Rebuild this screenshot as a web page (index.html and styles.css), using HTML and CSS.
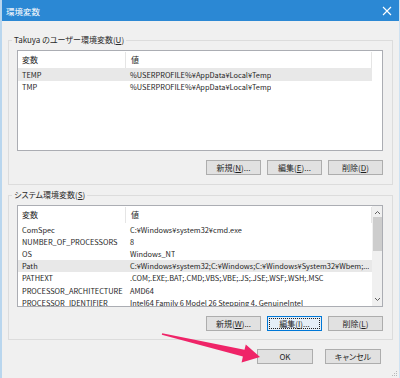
FILE: index.html
```html
<!DOCTYPE html>
<html lang="ja">
<head>
    <meta charset="UTF-8">
    <title>環境変数</title>
    <link rel="stylesheet" href="styles.css">
</head>
<body>
    <div class="window">
        <div class="titlebar">
            <span class="title">環境変数</span>
            <svg class="close" width="10" height="10" viewBox="0 0 10 10">
                <path d="M1 1 L9 9 M9 1 L1 9" stroke="#fff" stroke-width="1.1" fill="none"/>
            </svg>
        </div>

        <div class="body">
            <fieldset class="group">
                <legend>Takuya のユーザー環境変数(<u>U</u>)</legend>
                <div class="list list-user">
                    <div class="rows">
                        <div class="row head"><span class="name">変数</span><span class="value">値</span></div>
                        <div class="row selected"><span class="name">TEMP</span><span class="value">%USERPROFILE%¥AppData¥Local¥Temp</span></div>
                        <div class="row"><span class="name">TMP</span><span class="value">%USERPROFILE%¥AppData¥Local¥Temp</span></div>
                    </div>
                </div>
                <div class="buttons">
                    <button>新規(<u>N</u>)...</button>
                    <button>編集(<u>E</u>)...</button>
                    <button>削除(<u>D</u>)</button>
                </div>
            </fieldset>

            <fieldset class="group group-system">
                <legend>システム環境変数(<u>S</u>)</legend>
                <div class="list list-system">
                    <div class="rows">
                        <div class="row head"><span class="name">変数</span><span class="value">値</span></div>
                        <div class="row"><span class="name">ComSpec</span><span class="value">C:¥Windows¥system32¥cmd.exe</span></div>
                        <div class="row"><span class="name">NUMBER_OF_PROCESSORS</span><span class="value">8</span></div>
                        <div class="row"><span class="name">OS</span><span class="value">Windows_NT</span></div>
                        <div class="row selected"><span class="name">Path</span><span class="value">C:¥Windows¥system32;C:¥Windows;C:¥Windows¥System32¥Wbem;...</span></div>
                        <div class="row"><span class="name">PATHEXT</span><span class="value">.COM;.EXE;.BAT;.CMD;.VBS;.VBE;.JS;.JSE;.WSF;.WSH;.MSC</span></div>
                        <div class="row"><span class="name">PROCESSOR_ARCHITECTURE</span><span class="value">AMD64</span></div>
                        <div class="row"><span class="name">PROCESSOR_IDENTIFIER</span><span class="value">Intel64 Family 6 Model 26 Stepping 4, GenuineIntel</span></div>
                    </div>
                    <div class="scrollbar">
                        <svg class="arrow-up" width="7" height="5" viewBox="0 0 7 5"><path d="M1 4 L3.5 1.5 L6 4" stroke="#606060" stroke-width="1" fill="none"/></svg>
                        <div class="thumb"></div>
                        <svg class="arrow-down" width="7" height="5" viewBox="0 0 7 5"><path d="M1 1 L3.5 3.5 L6 1" stroke="#606060" stroke-width="1" fill="none"/></svg>
                    </div>
                </div>
                <div class="buttons">
                    <button>新規(<u>W</u>)...</button>
                    <button class="focused"><span class="focus-ring">編集(<u>I</u>)...</span></button>
                    <button>削除(<u>L</u>)</button>
                </div>
            </fieldset>

            <div class="dialog-buttons">
                <button class="wide">OK</button>
                <button class="wide">キャンセル</button>
            </div>
        </div>

        <svg class="grip" width="6" height="6" viewBox="0 0 6 6">
            <rect x="4" y="0" width="1" height="1" fill="#b8b8b8"/>
            <rect x="2" y="2" width="1" height="1" fill="#b8b8b8"/>
            <rect x="4" y="2" width="1" height="1" fill="#b8b8b8"/>
            <rect x="0" y="4" width="1" height="1" fill="#b8b8b8"/>
            <rect x="2" y="4" width="1" height="1" fill="#b8b8b8"/>
            <rect x="4" y="4" width="1" height="1" fill="#b8b8b8"/>
        </svg>

        <!-- annotation arrow drawn over the dialog -->
        <svg class="pointer" width="400" height="378" viewBox="0 0 400 378">
            <polygon points="162.2,333.2 244.5,349.8 245.8,344.4 260,357 241.6,362.5 242.9,356.6 161.8,334.8" fill="#ef2468"/>
        </svg>
    </div>
</body>
</html>
```

FILE: styles.css
```css
body {
    margin: 0;
    font-family: "Noto Sans CJK JP", sans-serif;
    font-size: 8px;
    font-feature-settings: "palt";
    color: #1e1e1e;
}
.window {
    position: relative;
    width: 400px;
    height: 378px;
    box-sizing: border-box;
    background-color: #f0f0f0;
    border-left: 2px solid #b9d6ee;
    border-right: 1px solid #cfe2f2;
    overflow: hidden;
}
.titlebar {
    height: 21px;
    margin-left: -2px;
    margin-right: -1px;
    background-color: #2b88d4;
    color: white;
    display: flex;
    align-items: center;
    justify-content: space-between;
    padding: 0 8px 0 6px;
}
.title {
    font-size: 8.5px;
}
.body {
    padding: 13px 6px 0 6px;
}
.group {
    margin: 0;
    padding: 4px 9px 9px 8px;
    border: 1px solid #dcdcdc;
    min-width: 0;
}
.group legend {
    padding: 0 2px;
    margin-left: -5px;
    line-height: 12px;
    color: #2a2a2a;
}
.group-system {
    margin-top: 4px;
    padding-bottom: 8px;
}
.list {
    display: flex;
    background: white;
    border: 1px solid #abadb3;
    overflow: hidden;
    font-size: 7.4px;
}
.list-user {
    height: 99px;
}
.list-system {
    height: 100px;
}
.rows {
    width: 354px;
    flex-shrink: 0;
}
.row {
    display: flex;
    height: 12.2px;
    align-items: center;
    white-space: nowrap;
}
.list-user .row {
    height: 12.6px;
}
.row.head,
.list-user .row.head {
    height: 17px;
}
.row.selected {
    background-color: #e8e8e8;
}
.name {
    width: 103px;
    padding-left: 4px;
    flex-shrink: 0;
}
.value {
    padding-left: 5px;
    overflow: hidden;
}
.head .name,
.head .value {
    height: 16px;
    line-height: 16px;
    border-right: 1px solid #e5e5e5;
    font-size: 8px;
}
.head .value {
    flex: 1;
}
.scrollbar {
    flex: 1;
    background-color: #f0f0f0;
    display: flex;
    flex-direction: column;
    align-items: center;
}
.arrow-up {
    margin-top: 4px;
}
.thumb {
    width: 9px;
    height: 34px;
    margin-top: 2px;
    background-color: #cdcdcd;
}
.arrow-down {
    margin-top: auto;
    margin-bottom: 4px;
}
.buttons {
    display: flex;
    justify-content: flex-end;
    gap: 6px;
    margin-top: 9px;
}
.group-system .buttons {
    margin-top: 9px;
}
button {
    width: 55px;
    height: 15px;
    padding: 0;
    font-family: inherit;
    font-size: 8px;
    font-feature-settings: "palt";
    color: #1e1e1e;
    background-color: #e1e1e1;
    border: 1px solid #adadad;
    display: flex;
    align-items: center;
    justify-content: center;
}
button.focused {
    border-color: #0078d7;
    background-color: #e5eef7;
}
.focus-ring {
    display: flex;
    align-items: center;
    justify-content: center;
    width: 49px;
    height: 9px;
    border: 1px dotted #222;
}
.dialog-buttons {
    display: flex;
    justify-content: flex-end;
    gap: 12px;
    margin-top: 9px;
    margin-right: 12px;
}
button.wide {
    width: 56px;
}
.grip {
    position: absolute;
    right: 1px;
    bottom: 1px;
}
.pointer {
    position: absolute;
    left: -2px;
    top: 0;
}
```
